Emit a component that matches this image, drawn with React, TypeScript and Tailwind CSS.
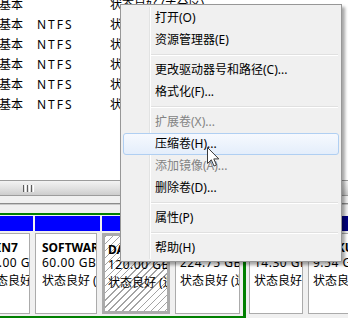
import React from 'react'

type Part = {
    w: string
    head: string
    sel?: boolean
    pad: string
    lines: [string, string, string]
}

const parts: Part[] = [
    { w: 'w-[53px]', head: 'bg-[#0000ff]', pad: 'pl-[3px]', lines: ['WIN7', '50.00 GB NTFS', '状态良好 (系统, 启动)'] },
    { w: 'w-[65px]', head: 'bg-[#0000ff]', pad: 'pl-[6px]', lines: ['SOFTWARE (D:)', '60.00 GB NTFS', '状态良好 (逻辑驱动器)'] },
    { w: 'w-[71px]', head: 'bg-[#0000ff]', pad: 'pl-[3px]', sel: true, lines: ['DATA (E:)', '120.00 GB NTFS', '状态良好 (逻辑驱动器)'] },
    { w: 'w-[68px]', head: 'bg-[#0000ff]', pad: 'pl-[4px]', lines: ['MEDIA (F:)', '224.75 GB NTFS', '状态良好 (逻辑驱动器)'] },
]

const primary: Part[] = [
    { w: 'w-[57px]', head: 'bg-[#000080]', pad: 'pl-[4px]', lines: ['RECOVERY', '14.30 GB NTFS', '状态良好 (主分区)'] },
    { w: 'w-[60px]', head: 'bg-[#000080]', pad: 'pl-[4px]', lines: ['BACKUP', '9.54 GB NTFS', '状态良好 (主分区)'] },
]

const menu: (string | { t: string; dis?: boolean; hl?: boolean })[] = [
    { t: '打开(O)' },
    { t: '资源管理器(E)' },
    'sep',
    { t: '更改驱动器号和路径(C)...' },
    { t: '格式化(F)...' },
    'sep',
    { t: '扩展卷(X)...', dis: true },
    { t: '压缩卷(H)...', hl: true },
    { t: '添加镜像(A)...', dis: true },
    { t: '删除卷(D)...' },
    'sep',
    { t: '属性(P)' },
    'sep',
    { t: '帮助(H)' },
]

const Cell: React.FC<{ p: Part; first?: boolean }> = ({ p, first }) => (
    <div className={`${p.w} shrink-0 flex flex-col`}>
        <div className={`h-[15px] ${p.head}`}></div>
        <div
            className={`mt-[2px] h-[81px] mr-[3px] overflow-hidden whitespace-nowrap pt-[5px] ${p.pad} ${
                p.sel
                    ? 'border-[3px] border-[#ababab] bg-white bg-[repeating-linear-gradient(135deg,#a4a4a4_0px,#a4a4a4_1px,transparent_1px,transparent_5px)]'
                    : 'border border-[#ababab] bg-white'
            }`}
        >
            <div className={`font-bold leading-[17px] ${first ? 'pl-[1px]' : ''}`}>{p.lines[0]}</div>
            <div className="leading-[14px] tracking-[0.5px]">{p.lines[1]}</div>
            <div className="mt-[4px] leading-[14px]">{p.lines[2]}</div>
        </div>
    </div>
)

const App: React.FC = () => {
    const rows = [
        ['基本', '', '状态良好 (主分区)'],
        ['基本', 'NTFS', '状态良好 (逻辑驱动器)'],
        ['基本', 'NTFS', '状态良好 (逻辑驱动器)'],
        ['基本', 'NTFS', '状态良好 (逻辑驱动器)'],
        ['基本', 'NTFS', '状态良好 (逻辑驱动器)'],
        ['基本', 'NTFS', '状态良好 (逻辑驱动器)'],
    ]

    return (
        <div className="relative w-[348px] h-[318px] overflow-hidden bg-white text-[12px] text-black font-['Noto_Sans','Noto_Sans_CJK_SC',sans-serif]">
            {/* VOLUME LIST */}
            <div className="h-[180px] overflow-hidden">
                <div className="-mt-[5px]">
                    {rows.map((r, i) => (
                        <div key={i} className="h-[20px] leading-[20px] flex whitespace-nowrap">
                            <span className="w-[38px] -ml-[1px] shrink-0">{r[0]}</span>
                            <span className="w-[73px] shrink-0 tracking-[2px]">{r[1]}</span>
                            <span>{r[2]}</span>
                        </div>
                    ))}
                </div>
            </div>

            {/* HORIZONTAL SCROLLBAR */}
            <div className="h-[16px] border-y border-[#9c9c9c] bg-linear-to-b from-[#f3f3f3] via-[#e2e2e2] to-[#cdcdcd] flex items-center">
                <div className="ml-[23px] flex gap-[1px] h-[7px]">
                    <div className="w-[1px] bg-[#5c5c5c]"></div>
                    <div className="w-[1px] bg-white"></div>
                    <div className="w-[1px] bg-[#5c5c5c]"></div>
                    <div className="w-[1px] bg-white"></div>
                    <div className="w-[1px] bg-[#5c5c5c]"></div>
                    <div className="w-[1px] bg-white"></div>
                </div>
            </div>

            <div className="h-[7px] bg-[#f0f0f0]"></div>
            <div className="h-[2px] border-t border-[#8c8c8c] bg-[#c9c9c9]"></div>

            {/* DISK MAP */}
            <div className="h-[113px] bg-[#f0f0f0] pt-[8px] flex">
                <div className="-ml-[20px] h-[105px] border-t-2 border-b-2 border-r-[3px] border-[#008000] pt-[1px] flex gap-[2px]">
                    {parts.map((p, i) => (
                        <Cell key={i} p={p} first={i === 0} />
                    ))}
                </div>
                <div className="ml-[3px] pt-[3px] flex gap-[2px]">
                    {primary.map((p, i) => (
                        <Cell key={i} p={p} />
                    ))}
                </div>
            </div>

            {/* CONTEXT MENU */}
            <div className="absolute left-[120px] top-[4px] w-[222px] border border-[#979797] bg-[#f0f0f0] p-[2px] shadow-[3px_3px_3px_rgba(0,0,0,0.35)]">
                <div className="relative">
                    <div className="absolute left-[26px] top-0 bottom-0 w-[1px] bg-[#e2e3e3]"></div>
                    <div className="absolute left-[27px] top-0 bottom-0 w-[1px] bg-white"></div>
                    {menu.map((m, i) =>
                        m === 'sep' ? (
                            <div key={i} className="h-[8px] flex items-center pl-[27px] pr-[1px]">
                                <div className="w-full h-[2px] border-t border-[#e0e0e0] bg-white"></div>
                            </div>
                        ) : (
                            <div
                                key={i}
                                className={`relative h-[22px] flex items-center pl-[31px] border rounded-[3px] whitespace-nowrap ${
                                    m.hl
                                        ? 'border-[#b0cff2] bg-linear-to-b from-[#f6f9fe] to-[#e4eefb]'
                                        : 'border-transparent'
                                } ${m.dis ? 'text-[#838383]' : 'text-black'}`}
                            >
                                {m.t}
                            </div>
                        )
                    )}
                </div>
            </div>

            {/* MOUSE POINTER */}
            <svg className="absolute left-[207px] top-[147px]" width="13" height="21" viewBox="0 0 13 21">
                <path
                    d="M0.5 0.5 L0.5 16.5 L4.3 12.8 L7 19 L9.4 18 L6.8 11.9 L11.8 11.9 Z"
                    fill="#ffffff"
                    stroke="#3a3a3a"
                    strokeWidth="1"
                    strokeLinejoin="round"
                />
            </svg>
        </div>
    )
}

export default App
